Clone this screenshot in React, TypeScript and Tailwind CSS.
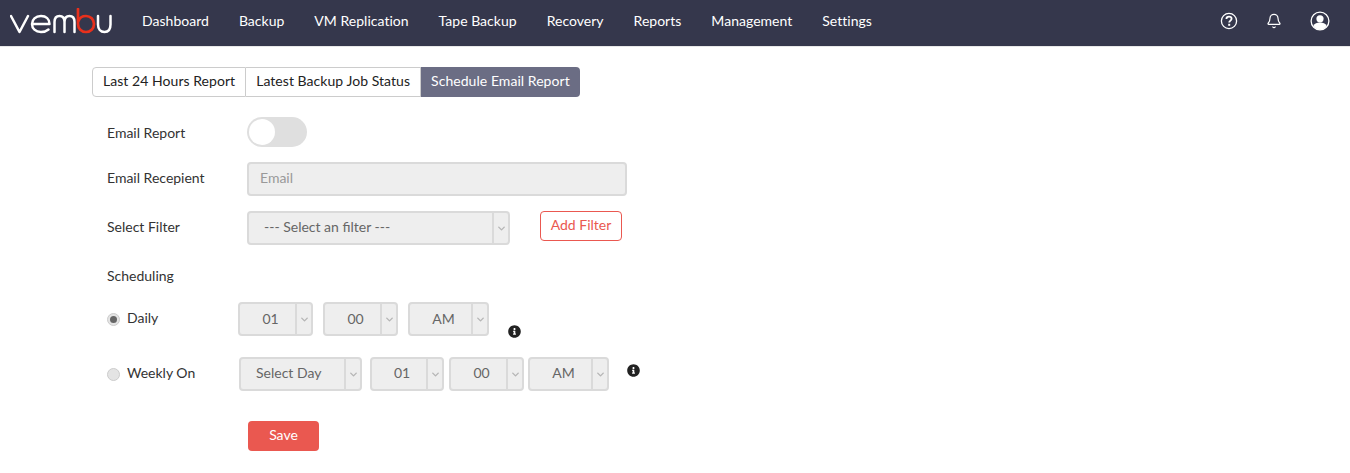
import { Bell, ChevronDown } from "lucide-react";
import { FaInfoCircle } from "react-icons/fa";

const navItems = ["Dashboard", "Backup", "VM Replication", "Tape Backup", "Recovery", "Reports", "Management", "Settings"];

const Logo = () => (
  <svg width="102" height="26" viewBox="0 0 102 26" fill="none" className="block">
    <g stroke="#ffffff" strokeWidth="2.5" strokeLinecap="round" strokeLinejoin="round">
      <path d="M1 8 L9.5 24 L18 8" />
      <path d="M22 16 H39.5 C39.5 11 36 8 31 8 C25.5 8 22 11.5 22 16 C22 20.5 25.5 24 31 24 C34 24 36.5 23.2 38.5 21.5" />
      <path d="M44.5 24 V14 C44.5 10 46.5 8 49.5 8 C52.5 8 54.5 10 54.5 14 V24 M54.5 14 C54.5 10 56.5 8 59.5 8 C62.5 8 64.5 10 64.5 14 V24" />
      <path d="M88 8 V16.5 C88 21 90.5 24 94.5 24 C98.5 24 100.5 21 100.5 16.5 V8" />
    </g>
    <path d="M68 1 V16 C68 20.5 71.5 24 76 24 C80.5 24 84 20.5 84 16 C84 11.5 80.5 8 76 8 C72.5 8 69.5 10 68.5 13" stroke="#e8301c" strokeWidth="2.7" strokeLinecap="round" />
  </svg>
);

const HelpIcon = () => (
  <svg width="18" height="18" viewBox="0 0 18 18" fill="none">
    <circle cx="9" cy="9" r="7.6" stroke="#fff" strokeWidth="1.3" />
    <path d="M6.4 7 C6.4 5.4 7.6 4.6 9 4.6 C10.5 4.6 11.6 5.5 11.6 6.8 C11.6 8.6 9.2 8.6 9.2 10.6" stroke="#fff" strokeWidth="1.8" />
    <rect x="8.2" y="11.8" width="2" height="2" fill="#fff" />
  </svg>
);

const UserIcon = () => (
  <svg width="20" height="20" viewBox="0 0 20 20" fill="none">
    <circle cx="10" cy="10" r="8.9" stroke="#fff" strokeWidth="1.3" />
    <circle cx="10" cy="7.8" r="3.6" fill="#fff" />
    <path d="M3.4 15 C4.5 12.6 7 11.6 10 11.6 C13 11.6 15.5 12.6 16.6 15 C15 17.4 12.6 18.8 10 18.8 C7.4 18.8 5 17.4 3.4 15 Z" fill="#fff" />
  </svg>
);

const Select = ({ value, className, textClass = "justify-center pb-[4px] pl-[6px]" }: { value: string; className: string; textClass?: string }) => (
  <div className={`flex h-[34px] rounded border-2 border-[#dadada] bg-[#eeeeee] text-[14px] text-[#666666] ${className}`}>
    <div className={`flex flex-1 items-center ${textClass}`}>{value}</div>
    <div className="flex w-4 items-center justify-center border-l-2 border-[#dadada]">
      <ChevronDown size={11} strokeWidth={3} className="text-[#b5b5b5]" />
    </div>
  </div>
);

const dailyText = "justify-center pb-[2px] pl-[6px]";

export default function App() {
  return (
    <div className="min-h-[473px] bg-white font-['Lato',sans-serif] text-[14px] text-[#333333]">
      <nav className="flex h-[47px] items-center border-b border-[#e8e8e8] bg-[#35374c] pb-[4px] pl-[10px] pr-[20px]">
        <Logo />
        <ul className="-mt-[2px] ml-[30px] flex gap-[30px]">
          {navItems.map((item) => (
            <li key={item} className="text-[14px] tracking-[0.02px] text-white">
              {item}
            </li>
          ))}
        </ul>
        <div className="ml-auto flex items-center">
          <HelpIcon />
          <Bell size={16} strokeWidth={1.8} className="ml-[28px] text-white" />
          <div className="ml-[28px]">
            <UserIcon />
          </div>
        </div>
      </nav>

      <main className="pl-[92px] pt-[20px]">
        <div className="flex h-[30px] w-fit items-center tracking-[0.05px]">
          <div className="flex h-full items-center rounded-l border border-[#cccccc] px-[10px] pb-[4px] text-[#222222]">Last 24 Hours Report</div>
          <div className="flex h-full items-center border-y border-r border-[#cccccc] px-[10px] pb-[4px] text-[#222222]">Latest Backup Job Status</div>
          <div className="flex h-full items-center rounded-r bg-[#6b6d84] px-[10px] pb-[4px] text-white">Schedule Email Report</div>
        </div>

        <div className="pl-[15px]">
          <div className="mt-[20px] flex h-[30px] items-center">
            <span className="w-[140px]">Email Report</span>
            <div className="flex h-[30px] w-[60px] items-center rounded-full bg-[#dfdfdf] pl-[2px]">
              <div className="h-[26px] w-[26px] rounded-full bg-white" />
            </div>
          </div>

          <div className="mt-[15px] flex h-[34px] items-center">
            <span className="-mt-[4px] w-[140px]">Email Recepient</span>
            <div className="flex h-[34px] w-[380px] items-center rounded border-2 border-[#dadada] bg-[#eeeeee] pb-[4px] pl-[11px] text-[#999999]">Email</div>
          </div>

          <div className="mt-[15px] flex h-[34px] items-center">
            <span className="-mt-[4px] w-[140px]">Select Filter</span>
            <Select value="--- Select an filter ---" className="w-[263px]" textClass="pb-[4px] pl-[15px]" />
            <button className="ml-[30px] h-[30px] w-[82px] self-start rounded border border-[#ea5850] pb-[4px] text-[#ea5850]">Add Filter</button>
          </div>

          <div className="mt-[21px] h-[20px] leading-[20px]">Scheduling</div>

          <div className="mt-[16px] flex h-[34px] items-center">
            <div className="flex w-[131px] items-center gap-[7px]">
              <div className="flex h-[13px] w-[13px] items-center justify-center rounded-full border border-[#cccccc] bg-[#e4e4e4]">
                <div className="h-[7px] w-[7px] rounded-full bg-[#666666]" />
              </div>
              <span className="-mt-[4px]">Daily</span>
            </div>
            <Select value="01" className="w-[75px]" textClass={dailyText} />
            <Select value="00" className="ml-[10px] w-[75px]" textClass={dailyText} />
            <Select value="AM" className="ml-[10px] w-[81px]" textClass={dailyText} />
            <FaInfoCircle size={13} className="ml-[19px] mt-[24px] text-[#222222]" />
          </div>

          <div className="mt-[21px] flex h-[34px] items-center">
            <div className="flex w-[132px] items-center gap-[7px]">
              <div className="h-[13px] w-[13px] rounded-full border border-[#cccccc] bg-[#e4e4e4]" />
              <span className="-mt-[4px]">Weekly On</span>
            </div>
            <Select value="Select Day" className="w-[123px]" textClass="pb-[4px] pl-[15px]" />
            <Select value="01" className="ml-[8px] w-[74px]" />
            <Select value="00" className="ml-[5px] w-[75px]" />
            <Select value="AM" className="ml-[4px] w-[81px]" />
            <FaInfoCircle size={13} className="mb-[8px] ml-[18px] text-[#222222]" />
          </div>

          <button className="ml-[141px] mt-[30px] h-[30px] w-[71px] rounded bg-[#ea5850] pb-[4px] text-white">Save</button>
        </div>
      </main>
    </div>
  );
}
